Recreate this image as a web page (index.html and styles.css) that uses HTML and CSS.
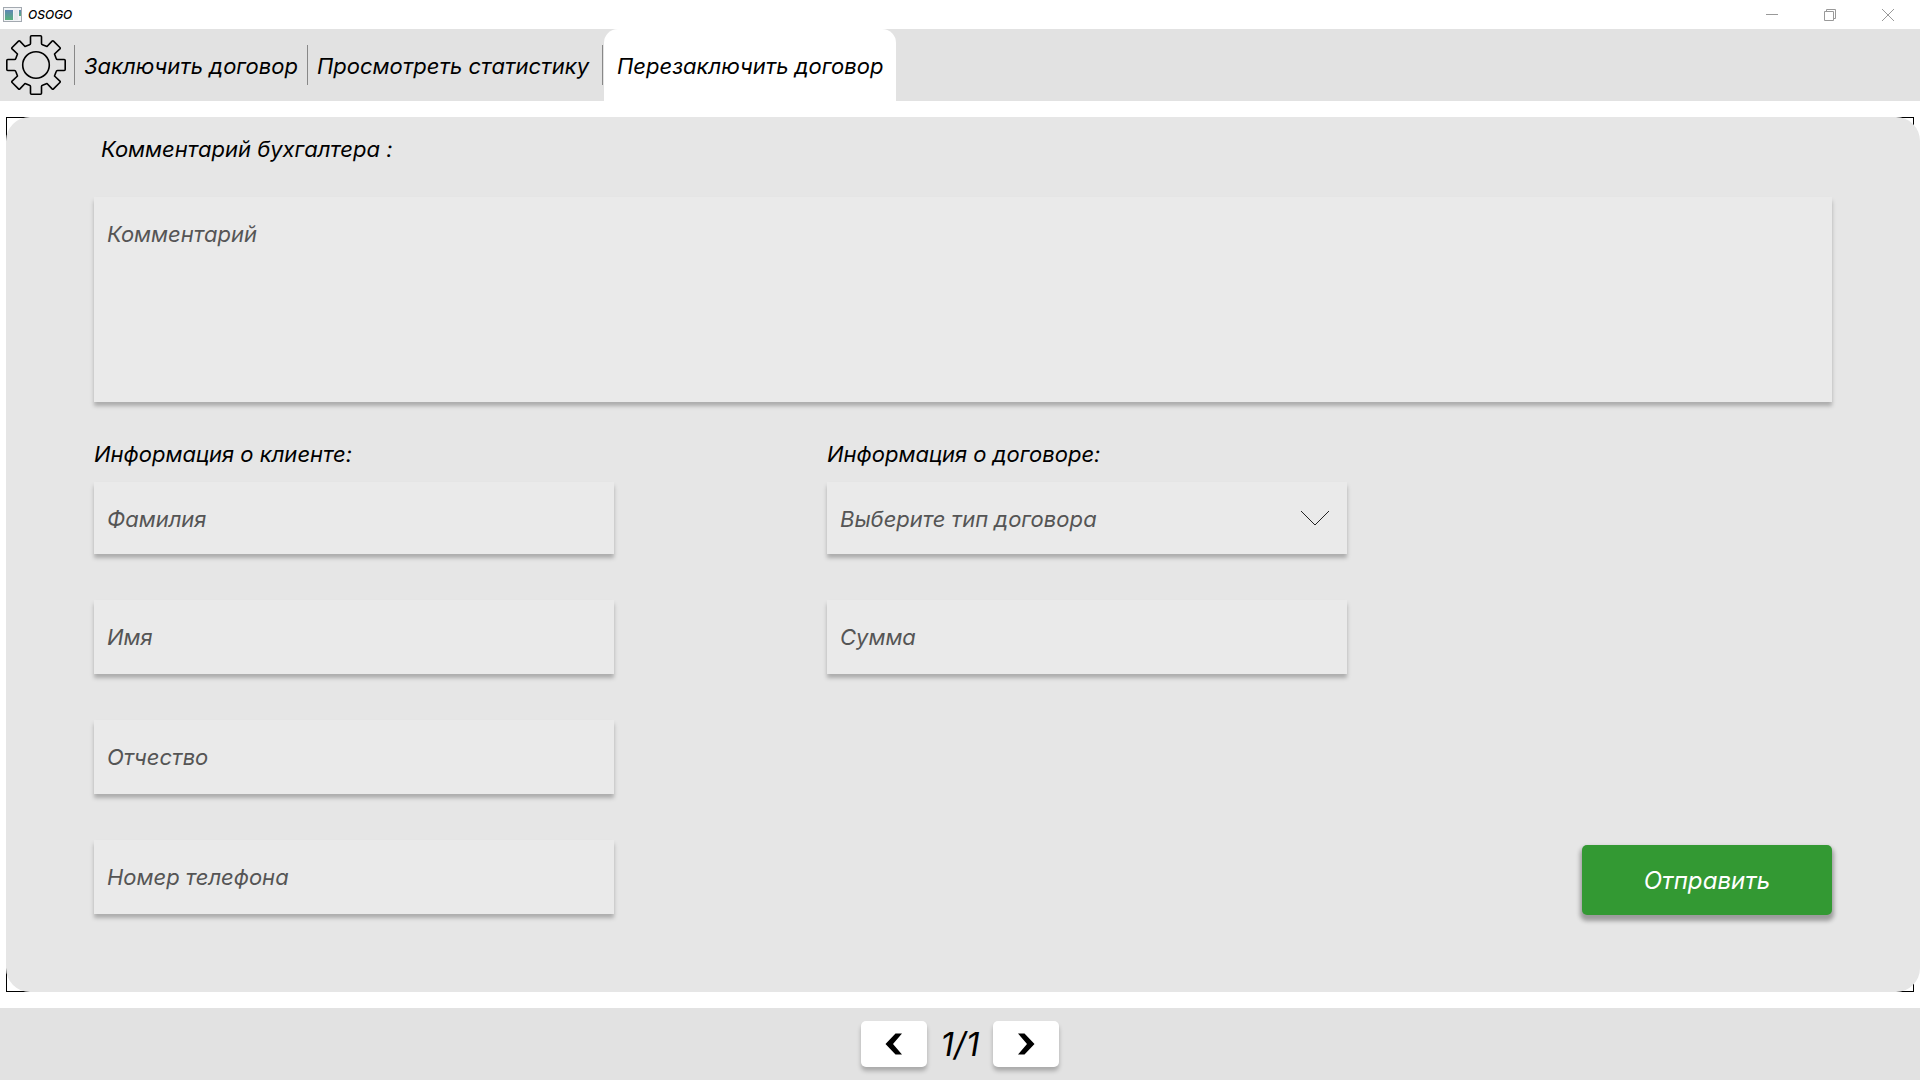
FILE: index.html
```html
<!DOCTYPE html>
<html lang="ru">
<head>
  <meta charset="utf-8">
  <meta name="viewport" content="width=device-width, initial-scale=1">
  <title>OSOGO</title>
  <link rel="stylesheet" href="styles.css">
</head>
<body>
  <header class="titlebar">
    <svg class="app-icon" width="19" height="16" viewBox="0 0 19 16" aria-hidden="true">
      <defs>
        <linearGradient id="pane" x1="0" y1="0" x2="0" y2="1">
          <stop offset="0" stop-color="#5f86b4"/>
          <stop offset="1" stop-color="#57b07c"/>
        </linearGradient>
      </defs>
      <rect x="0.5" y="0.5" width="18" height="14" fill="#f2f4f6" stroke="#a3a9b0"/>
      <rect x="2" y="3" width="8" height="10" fill="url(#pane)"/>
      <rect x="11" y="3" width="4" height="10" fill="#e6e9ec"/>
      <rect x="16" y="3" width="2" height="6" fill="url(#pane)"/>
    </svg>
    <span class="app-name">OSOGO</span>
    <div class="window-controls">
      <button class="window-button" type="button" aria-label="Свернуть">
        <svg width="14" height="14" viewBox="0 0 14 14"><path d="M1 6.5H13"/></svg>
      </button>
      <button class="window-button" type="button" aria-label="Развернуть">
        <svg width="14" height="14" viewBox="0 0 14 14"><path d="M1.500 3.500H10.500V12.500H1.500ZM3.500 3.500V1.500H12.500V10.500H10.500"/></svg>
      </button>
      <button class="window-button" type="button" aria-label="Закрыть">
        <svg width="14" height="14" viewBox="0 0 14 14"><path d="M1 1L13 13M13 1L1 13"/></svg>
      </button>
    </div>
  </header>

  <nav class="tabs">
    <button class="settings" type="button" aria-label="Настройки">
      <svg width="60" height="60" viewBox="-30 -30 60 60">
        <defs>
          <path id="teeth" d="M-29.200 0V-4.500Q-29.200 -5.500 -28.200 -5.500H-21.500Q-20.500 -5.500 -20.200 -6.500L-18.500 -11L-23.900 -16.100Q-24.600 -16.800 -23.900 -17.500L-17.500 -23.900Q-16.800 -24.600 -16.100 -23.900L-11 -18.500L-6.500 -20.200Q-5.500 -20.500 -5.500 -21.500V-28.200Q-5.500 -29.200 -4.500 -29.200H0"/>
        </defs>
        <use href="#teeth"/>
        <use href="#teeth" transform="rotate(90)"/>
        <use href="#teeth" transform="rotate(180)"/>
        <use href="#teeth" transform="rotate(270)"/>
        <circle r="13.300"/>
      </svg>
    </button>
    <a class="tab" href="#new">Заключить договор</a>
    <a class="tab" href="#stats">Просмотреть статистику</a>
    <a class="tab tab-active" href="#renew" aria-current="page">Перезаключить договор</a>
  </nav>

  <main class="frame">
    <form class="panel">
      <label class="heading comment-heading" for="comment">Комментарий бухгалтера :</label>
      <textarea class="field comment" id="comment" placeholder="Комментарий"></textarea>
      <div class="columns">
        <section class="group">
          <h2 class="heading">Информация о клиенте:</h2>
          <div class="fields">
            <input class="field field-first" type="text" placeholder="Фамилия" aria-label="Фамилия">
            <input class="field" type="text" placeholder="Имя" aria-label="Имя">
            <input class="field" type="text" placeholder="Отчество" aria-label="Отчество">
            <input class="field" type="tel" placeholder="Номер телефона" aria-label="Номер телефона">
          </div>
        </section>
        <section class="group">
          <h2 class="heading">Информация о договоре:</h2>
          <div class="fields">
            <div class="select-wrap">
              <select class="field field-first" aria-label="Тип договора">
                <option>Выберите тип договора</option>
              </select>
              <svg class="chevron" width="30" height="16" viewBox="0 0 30 16" aria-hidden="true"><path d="M1 1L15 15L29 1"/></svg>
            </div>
            <input class="field" type="text" placeholder="Сумма" aria-label="Сумма">
          </div>
        </section>
        <button class="submit" type="submit">Отправить</button>
      </div>
    </form>
  </main>

  <footer class="pager">
    <button class="page-button" type="button" aria-label="Назад">
      <svg width="18" height="22" viewBox="0 0 18 22"><path d="M10.500 0.500H17L8 11L17 21.500H10.500L0.500 11Z"/></svg>
    </button>
    <span class="page-count">1/1</span>
    <button class="page-button" type="button" aria-label="Вперёд">
      <svg width="18" height="22" viewBox="0 0 18 22"><path d="M7.500 0.500H1L10 11L1 21.500H7.500L17.500 11Z"/></svg>
    </button>
  </footer>
</body>
</html>
```

FILE: styles.css
```css
* {
  box-sizing: border-box;
}

body {
  display: flex;
  flex-direction: column;
  min-height: 100vh;
  margin: 0;
  background: #fff;
  color: #000;
  font: italic 400 22px/26px Inter, "Noto Sans", sans-serif;
}

button,
input,
select,
textarea {
  margin: 0;
  border: 0;
  border-radius: 0;
  font: inherit;
}

button {
  padding: 0;
  background: none;
  cursor: pointer;
}

/* Title bar */
.titlebar {
  display: flex;
  align-items: center;
  gap: 6px;
  height: 29px;
  padding-left: 3px;
}

.app-name {
  font-size: 12px;
  line-height: 16px;
  font-weight: 500;
}

.window-controls {
  display: flex;
  gap: 12px;
  margin-left: auto;
  padding-right: 9px;
}

.window-button {
  display: grid;
  place-items: center;
  width: 46px;
  height: 26px;
}

.window-button svg {
  fill: none;
  stroke: #999;
}

/* Tabs */
.tabs {
  display: flex;
  align-items: center;
  height: 72px;
  padding-left: 6px;
  background: #e2e2e2;
}

.settings {
  width: 60px;
  height: 60px;
  margin-right: 8px;
}

.settings svg {
  display: block;
  fill: none;
  stroke: #000;
  stroke-width: 1.6;
  stroke-linejoin: round;
}

.tab {
  height: 40px;
  padding: 0 9px;
  border-left: 1px solid #888;
  color: inherit;
  line-height: 42px;
  text-decoration: none;
  white-space: nowrap;
}

.tab-active {
  position: relative;
  align-self: stretch;
  height: auto;
  margin-left: 6px;
  padding: 0 13px;
  border: 0;
  border-radius: 14px 14px 0 0;
  background: #fff;
  line-height: 74px;
}

.tab-active::before {
  position: absolute;
  top: 16px;
  left: -2px;
  width: 1px;
  height: 40px;
  background: #888;
  content: "";
}

/* Form */
.frame {
  display: flex;
  flex: 1;
  margin: 16px 6px;
  border: 1px solid #000;
}

.panel {
  flex: 1;
  margin: -1px -7px -1px -1px;
  padding: 19px 88px 76px;
  border-radius: 24px;
  background: #e6e6e6;
}

.heading {
  display: block;
  margin: 0;
  font-size: 22px;
  line-height: 26px;
  font-weight: inherit;
}

.comment-heading {
  padding-left: 7px;
}

.field {
  display: block;
  width: 100%;
  height: 74px;
  padding: 0 13px;
  outline: 0;
  background: #eaeaea;
  box-shadow: 0 4px 4px rgba(0, 0, 0, 0.25);
  color: #555;
}

.field::placeholder {
  color: #555;
  opacity: 1;
}

.field-first {
  height: 72px;
  padding-top: 2px;
}

.comment {
  height: 205px;
  margin-top: 35px;
  padding-top: 24px;
  resize: none;
}

.columns {
  display: grid;
  grid-template-columns: minmax(0, 520px) minmax(0, 520px) 1fr;
  column-gap: 213px;
  margin-top: 39px;
}

.group {
  padding-bottom: 1px;
}

.fields {
  display: grid;
  gap: 46px;
  margin-top: 15px;
}

.select-wrap {
  position: relative;
}

select.field {
  appearance: none;
}

.chevron {
  position: absolute;
  top: 28px;
  right: 17px;
  fill: none;
  stroke: #222;
  pointer-events: none;
}

.submit {
  align-self: end;
  justify-self: end;
  width: 250px;
  height: 70px;
  padding-top: 2px;
  border-radius: 5px;
  background: #339933;
  box-shadow: 0 4px 4px 2px rgba(0, 0, 0, 0.32);
  color: #fff;
  font-size: 24px;
}

/* Pager */
.pager {
  display: flex;
  align-items: center;
  justify-content: center;
  height: 72px;
  background: #e2e2e2;
}

.page-button {
  display: grid;
  place-items: center;
  width: 66px;
  height: 46px;
  border-radius: 5px;
  background: #fff;
  box-shadow: 0 4px 4px rgba(0, 0, 0, 0.25);
}

.page-count {
  width: 66px;
  font-size: 33px;
  line-height: 48px;
  text-align: center;
}
```
